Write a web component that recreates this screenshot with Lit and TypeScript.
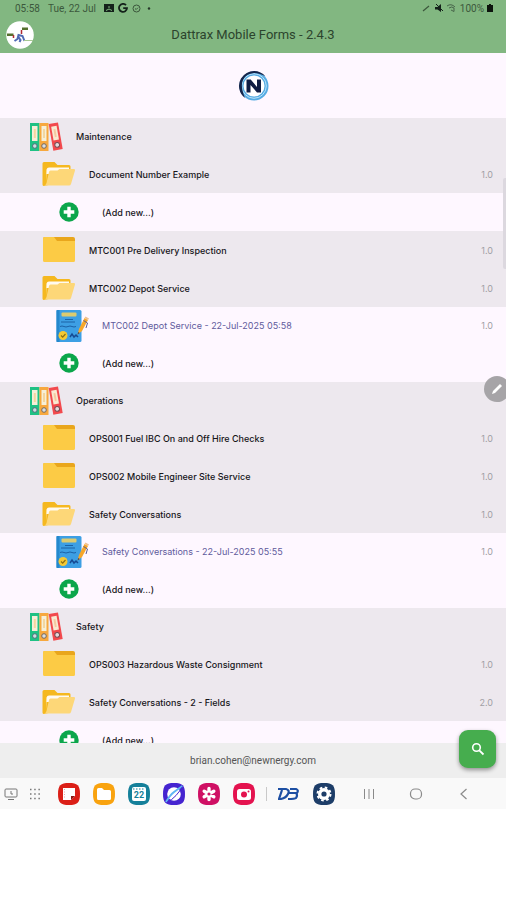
import { LitElement, html, css, svg, nothing } from "lit";
import { customElement } from "lit/decorators.js";

type Kind = "group" | "closed" | "open" | "draft" | "add";
interface Row {
  kind: Kind;
  label: string;
  version?: string;
}

const ADD: Row = { kind: "add", label: "(Add new...)" };

const ROWS: Row[] = [
  { kind: "group", label: "Maintenance" },
  { kind: "open", label: "Document Number Example", version: "1.0" },
  ADD,
  { kind: "closed", label: "MTC001 Pre Delivery Inspection", version: "1.0" },
  { kind: "open", label: "MTC002 Depot Service", version: "1.0" },
  { kind: "draft", label: "MTC002 Depot Service - 22-Jul-2025 05:58", version: "1.0" },
  ADD,
  { kind: "group", label: "Operations" },
  { kind: "closed", label: "OPS001 Fuel IBC On and Off Hire Checks", version: "1.0" },
  { kind: "closed", label: "OPS002 Mobile Engineer Site Service", version: "1.0" },
  { kind: "open", label: "Safety Conversations", version: "1.0" },
  { kind: "draft", label: "Safety Conversations - 22-Jul-2025 05:55", version: "1.0" },
  ADD,
  { kind: "group", label: "Safety" },
  { kind: "closed", label: "OPS003 Hazardous Waste Consignment", version: "1.0" },
  { kind: "open", label: "Safety Conversations - 2 - Fields", version: "2.0" },
  ADD,
];

const binders = html`<svg width="34" height="30" viewBox="-1 0 34 30" aria-hidden="true">
  <rect x="0" y="1" width="9.500" height="28" fill="#1fc184" />
  <rect x="9.500" y="1" width="9" height="28" fill="#f7a83e" />
  <rect x="2" y="4" width="5.500" height="15" fill="#f6efd8" />
  <rect x="11.500" y="4" width="5" height="15" fill="#f6efd8" />
  <path d="M3.800 7h2v9h-2zM13 7h2v9h-2z" fill="#f3d6a0" />
  <circle cx="4.800" cy="24" r="2.300" fill="#c9dfe0" stroke="#56707c" />
  <circle cx="14" cy="24" r="2.300" fill="#d9dde0" stroke="#76685c" />
  <g transform="rotate(-10 26 15)">
    <rect x="21" y="1" width="9.500" height="27" fill="#f2494d" />
    <rect x="23" y="4" width="5.500" height="14" fill="#f9ead2" />
    <path d="M24.800 7h2v8h-2z" fill="#f4c9a0" />
    <circle cx="25.800" cy="23" r="2.400" fill="#e2dadd" stroke="#7c4a52" />
  </g>
</svg>`;

const closedFolder = html`<svg width="34" height="28" viewBox="0 0 34 28" aria-hidden="true">
  <path d="M2.500 1H31q2 0 2 2v8H1V2.500Q1 1 2.500 1z" fill="#e9a61c" />
  <path d="M1 2.500Q1 1 2.500 1H12l3 4h18v19.500q0 1.500-1.500 1.500h-29Q1 26 1 24.500z" fill="#fccb45" />
</svg>`;

const openFolder = html`<svg width="34" height="28" viewBox="0 0 34 28" aria-hidden="true">
  <path d="M2 2h10.500l3 3H27q1.500 0 1.500 1.500V20L2 26Q.500 26 .500 24.500v-21Q.500 2 2 2z" fill="#f5b81f" />
  <path d="M4.500 9.500Q5 7.500 7 7.500h20V14H4v8z" fill="#fffaf0" />
  <path d="M8.500 10.500h7l2-1.500H32q1.500 0 1 1.500L29 24q-.500 1.500-2 1.500H2q2-.500 2.500-2.500L7 12q.300-1.500 1.500-1.500z" fill="#fdd778" />
</svg>`;

const draftForm = html`<svg width="34" height="34" viewBox="0 0 34 34" aria-hidden="true">
  <rect x="1.500" y="1" width="25" height="32" rx="1.500" fill="#3d9fe4" />
  <path d="M1.500 1h3v32h-3z" fill="#2588cd" />
  <rect x="6.500" y="3.500" width="15" height="4" rx="1" fill="#dccb70" />
  <path d="M10 10.500h8M6 13h14M5 17.500q2-1 4 0t4 0 4 0 4 0" stroke="#1c62a6" fill="none" />
  <path d="M15 28l2-3 2 3 2-2 2 2" stroke="#164a93" stroke-width="1.500" fill="none" />
  <circle cx="8" cy="26.500" r="4.500" fill="#f5c934" />
  <path d="M6 26.500l1.700 1.700 2.800-3.200" stroke="#8c7013" stroke-width="1.200" fill="none" />
  <path d="M22.500 25.500L24 20l5.500-11 3.500 2-6 11z" fill="#f6a72a" />
  <path d="M29.500 9l1-1.500 3.500 2-1 1.500z" fill="#f1c08c" />
  <path d="M22.500 25.500l.700-2.500 1.500 1z" fill="#42405d" />
  <path d="M28.500 11.500l4 2.500-1.500 5" stroke="#5b5d8f" fill="none" />
</svg>`;

const plus = html`<svg width="20" height="20" viewBox="0 0 20 20" aria-hidden="true">
  <circle cx="10" cy="10" r="9.700" fill="#0ba64b" />
  <path d="M8.300 4.700h3.400v3.600h3.600v3.400h-3.600v3.600H8.300v-3.600H4.700V8.300h3.600z" fill="#fff" />
</svg>`;

const ICONS = { group: binders, closed: closedFolder, open: openFolder, draft: draftForm, add: plus };

const squircle = "M11 0C19.500 0 22 2.500 22 11s-2.500 11-11 11S0 19.500 0 11 2.500 0 11 0z";
const app = (name: string, fill: string, glyph: unknown) => ({ name, fill, glyph });
const APPS = [
  app("Notes", "#db1f17", svg`<path d="M5 5h12v8l-4 4H5z" fill="#fff"/><path d="M13 17v-4h4z" fill="#8d1512"/><path d="M6.500 6v10" stroke="#e9a9a5" stroke-dasharray="1 1.500"/>`),
  app("My Files", "#f9a30f", svg`<path d="M4 6.500Q4 5 5.500 5H9l2 2h5.500Q18 7 18 8.500v7q0 1.500-1.500 1.500h-11Q4 17 4 15.500z" fill="#fff"/>`),
  app("Calendar", "#15809a", svg`<rect x="4" y="4" width="14" height="14" rx="2" fill="#fff"/><path d="M5 6h12" stroke="#15809a" stroke-dasharray="1.500 1.500"/><text x="11" y="15" class="day">22</text>`),
  app("Internet", "#4524d0", svg`<circle cx="11" cy="11" r="6.800" fill="#fff"/><path d="M3 19Q7 12 11 9T19.500 3" stroke="#5fb5f3" stroke-width="2" fill="none"/><path d="M3.500 19.500Q9 17 13 12.500T19.500 3.500" stroke="#4524d0" fill="none"/>`),
  app("Gallery", "#cf1064", svg`<g stroke="#fff" stroke-width="3.400" stroke-linecap="round"><path d="M11 5.500v11M6.200 8.200l9.600 5.600M6.200 13.800l9.600-5.600"/></g><circle cx="11" cy="11" r="1.600" fill="#cf1064"/>`),
  app("Camera", "#e4134f", svg`<rect x="4" y="6" width="14" height="11" rx="2.500" fill="#fff"/><circle cx="11" cy="11.500" r="3" fill="#e4134f"/><circle cx="15.500" cy="8.500" r="1" fill="#e4134f"/>`),
];

@customElement("app-root")
export class AppRoot extends LitElement {
  static styles = css`
    :host {
      display: flex;
      flex-direction: column;
      box-sizing: border-box;
      height: 100vh;
      padding-bottom: 91px;
      background: #fff;
      color: #1c1b1f;
      font-family: Roboto, "Liberation Sans", sans-serif;
      font-size: 10px;
      position: relative;
      overflow: hidden;
    }
    button { border: 0; padding: 0; margin: 0; background: none; color: inherit; font: inherit; cursor: pointer; }
    svg { display: block; flex: none; }
    .top { background: #82b781; }
    .status { display: flex; align-items: center; justify-content: space-between; height: 16px; padding: 0 13px 0 15px; color: #3c573c; }
    .status div { display: flex; align-items: center; gap: 4px; }
    .status .power { gap: 3px; }
    .status .date { margin: 0 4px; }
    .bar { display: grid; grid-template-columns: 40px 1fr 40px; align-items: center; height: 37px; }
    .avatar { justify-self: center; }
    h1 { margin: 0; font-size: 13px; font-weight: 400; text-align: center; color: #2c442d; }
    .brand { display: flex; justify-content: center; align-items: center; flex: none; height: 65px; background: #fef7ff; }
    .forms { position: relative; flex: 1; min-height: 0; overflow: hidden; background: #fef7ff; }
    ul { list-style: none; margin: 0; padding: 0; }
    .row { display: flex; align-items: center; width: 100%; height: 38px; padding: 0 13px 0 42px; text-align: left; font-family: Inter, Roboto, sans-serif; font-size: 9px; font-weight: 500; color: #17161a; }
    .row .icon { display: flex; justify-content: center; width: 34px; }
    .row .label { flex: 1; margin-left: 13px; }
    .row .version { font-weight: 400; color: #a19fa5; }
    .group, .closed, .open { background: #ede8ee; }
    .group { height: 37px; padding-left: 29px; }
    .draft, .add { padding-left: 55px; }
    .draft { height: 37px; font-weight: 400; color: #605a9c; }
    .add .icon { width: 28px; }
    .add .label { margin-left: 19px; }
    .thumb { position: absolute; right: 0; top: 60px; width: 3px; height: 91px; background: #dcd8df; border-radius: 2px 0 0 2px; }
    .account { display: flex; align-items: center; justify-content: center; flex: none; height: 35px; background: #eeeeee; color: #555; }
    .dock { display: flex; align-items: center; flex: none; height: 31px; padding: 0 4px; background: #f9f9f9; }
    .dock .small { margin-right: 10px; }
    .apps { display: flex; gap: 13px; margin-left: 6px; }
    .sep { width: 1px; height: 14px; margin: 0 11px; background: #c9c9c9; }
    .recent { display: flex; gap: 13px; }
    .nav { display: flex; flex: 1; justify-content: space-around; margin-left: 10px; padding-right: 14px; }
    .day { font-size: 9px; font-weight: 700; fill: #15809a; text-anchor: middle; }
    .pen { position: absolute; right: -4px; top: 376px; width: 26px; height: 26px; border-radius: 50%; background: #a6a4a7; display: grid; place-items: center; }
    .fab { position: absolute; right: 10px; bottom: 132px; width: 37px; height: 38px; border-radius: 9px; background: #46ad4e; display: grid; place-items: center; box-shadow: 0 2px 4px #0006; }
  `;

  private row(r: Row) {
    return html`<li>
      <button class="row ${r.kind}">
        <span class="icon">${ICONS[r.kind]}</span>
        <span class="label">${r.label}</span>
        ${r.version ? html`<span class="version">${r.version}</span>` : nothing}
      </button>
    </li>`;
  }

  render() {
    return html`
      <header class="top">
        <div class="status">
          <div>
            <span>05:58</span><span class="date">Tue, 22 Jul</span>
            <svg width="10" height="8" viewBox="0 0 10 8"><path d="M0 0h10v8H0z" fill="#14211a" /><path d="M2 6.500q3-3 6 0M4 3h2" stroke="#82b781" fill="none" /></svg>
            <svg width="10" height="10" viewBox="0 0 10 10"><path d="M8 2.200A4 4 0 1 0 9 5.200H5.200" fill="none" stroke="#14211a" stroke-width="1.800" /></svg>
            <svg width="9" height="9" viewBox="0 0 9 9"><circle cx="4.500" cy="4.500" r="3.500" fill="none" stroke="#3c573c" /><path d="M3 4.500l1.200 1L6 3.700" fill="none" stroke="#3c573c" /></svg>
            <svg width="9" height="3" viewBox="0 0 9 3"><circle cx="4" cy="1.500" r="1.200" fill="#26382a" /></svg>
          </div>
          <div class="power">
            <svg width="10" height="8" viewBox="0 0 10 8"><path d="M1 7l6-5" stroke="#3c573c" stroke-width="1.200" /></svg>
            <svg width="9" height="8" viewBox="0 0 9 8"><path d="M0 3h2.500L6 0v8L2.500 5.500H0z" fill="#14211a" /><path d="M1 0l7 7" stroke="#14211a" /></svg>
            <svg width="10" height="8" viewBox="0 0 10 8"><path d="M0 2q4-3 8 1M2 4q3-2 5 0M4 6l3 1.500V4" stroke="#47654a" fill="none" /></svg>
            <span>100%</span>
            <svg width="6" height="8" viewBox="0 0 6 8"><path d="M2 0h2v1h2v7H0V1h2z" fill="#0c140d" /></svg>
          </div>
        </div>
        <div class="bar">
          <svg class="avatar" width="28" height="28" viewBox="0 0 28 28">
            <circle cx="14" cy="14" r="13.800" fill="#fff" />
            <path d="M1 12.500h6.500v2.500H1zM16 6.500h6V9h-6z" fill="#55702e" />
            <path d="M15.500 9v4M7.500 14v3" stroke="#b02a35" stroke-width="1.500" />
            <path d="M8.500 20l3-2 1-4 4 1 2 5M12.500 16l2 3-1 2" stroke="#5069b4" stroke-width="2" fill="none" />
            <path d="M18 19.500h9" stroke="#a8c894" />
          </svg>
          <h1>Dattrax Mobile Forms - 2.4.3</h1>
        </div>
      </header>
      <div class="brand">
        <svg width="32" height="32" viewBox="0 0 32 32" role="img" aria-label="N logo">
          <circle cx="17" cy="16" r="12.500" fill="#fff" stroke="#56abe2" stroke-width="4" />
          <circle cx="17" cy="16" r="12.300" fill="none" stroke="#b9e4fb" />
          <path d="M8 28A15 15 0 0 1 4 8.500Q9 1 17 1q7 0 11.500 5.500Q23 3 17 3 9 3.500 6 10T8 28z" fill="#15264b" />
          <path d="M9.500 22.500v-13h4.200l6.300 7.500V9.500h4v13h-4L13.500 15v7.500z" fill="#101d42" />
        </svg>
      </div>
      <main class="forms">
        <ul>${ROWS.map((r) => this.row(r))}</ul>
        <div class="thumb"></div>
      </main>
      <div class="account">brian.cohen@newnergy.com</div>
      <nav class="dock">
        <button class="small" aria-label="Desktop"><svg width="14" height="14" viewBox="0 0 14 14"><path d="M2 2h10q1 0 1 1v6q0 1-1 1H2q-1 0-1-1V3q0-1 1-1zM4 12.500h6M7 4v3h2" fill="none" stroke="#777" /></svg></button>
        <button class="small" aria-label="All apps"><svg width="14" height="14" viewBox="0 0 14 14"><path d="M2 2.500h10M2 7h10M2 11.500h10" stroke="#777" stroke-width="1.500" stroke-dasharray="1.500 2.700" /></svg></button>
        <div class="apps">
          ${APPS.map(
            (a) => html`<button aria-label=${a.name}><svg width="22" height="22" viewBox="0 0 22 22"><path d=${squircle} fill=${a.fill} />${a.glyph}</svg></button>`,
          )}
        </div>
        <div class="sep"></div>
        <div class="recent">
          <button aria-label="DB">
            <svg width="22" height="22" viewBox="0 0 22 22"><path d="M0 6h8q4 1 2 5t-7 5H1l3-9M12 6h6q3 1 1 4h-8 7q2 2 0 5-1 1-8 1" fill="none" stroke="#1d4fa3" stroke-width="2.200" /></svg>
          </button>
          <button aria-label="Settings">
            <svg width="22" height="22" viewBox="0 0 22 22"><path d=${squircle} fill="#1d3d68" /><circle cx="11" cy="11" r="6" fill="#fff" /><circle cx="11" cy="11" r="6.500" fill="none" stroke="#fff" stroke-width="2" stroke-dasharray="2.600 2.500" /><circle cx="11" cy="11" r="2.600" fill="#1d3d68" /></svg>
          </button>
        </div>
        <div class="nav">
          <button aria-label="Recents"><svg width="14" height="14" viewBox="0 0 14 14"><path d="M2.500 2v10M7 2v10M11.500 2v10" stroke="#8a8a8a" /></svg></button>
          <button aria-label="Home"><svg width="14" height="14" viewBox="0 0 14 14"><rect x="1.500" y="2" width="11" height="10" rx="4.500" fill="none" stroke="#8a8a8a" stroke-width="1.200" /></svg></button>
          <button aria-label="Back"><svg width="14" height="14" viewBox="0 0 14 14"><path d="M9.500 2L4 7l5.500 5" fill="none" stroke="#8a8a8a" stroke-width="1.200" /></svg></button>
        </div>
      </nav>
      <button class="pen" aria-label="Edit"><svg width="14" height="14" viewBox="0 0 14 14"><path d="M2 12l1-3 7-7 2 2-7 7z" fill="#fff" /></svg></button>
      <button class="fab" aria-label="Search"><svg width="14" height="14" viewBox="0 0 14 14"><circle cx="5.500" cy="5.500" r="3.800" fill="none" stroke="#fff" stroke-width="1.600" /><path d="M8.300 8.300l4.200 4.200" stroke="#fff" stroke-width="1.800" /></svg></button>
    `;
  }
}
